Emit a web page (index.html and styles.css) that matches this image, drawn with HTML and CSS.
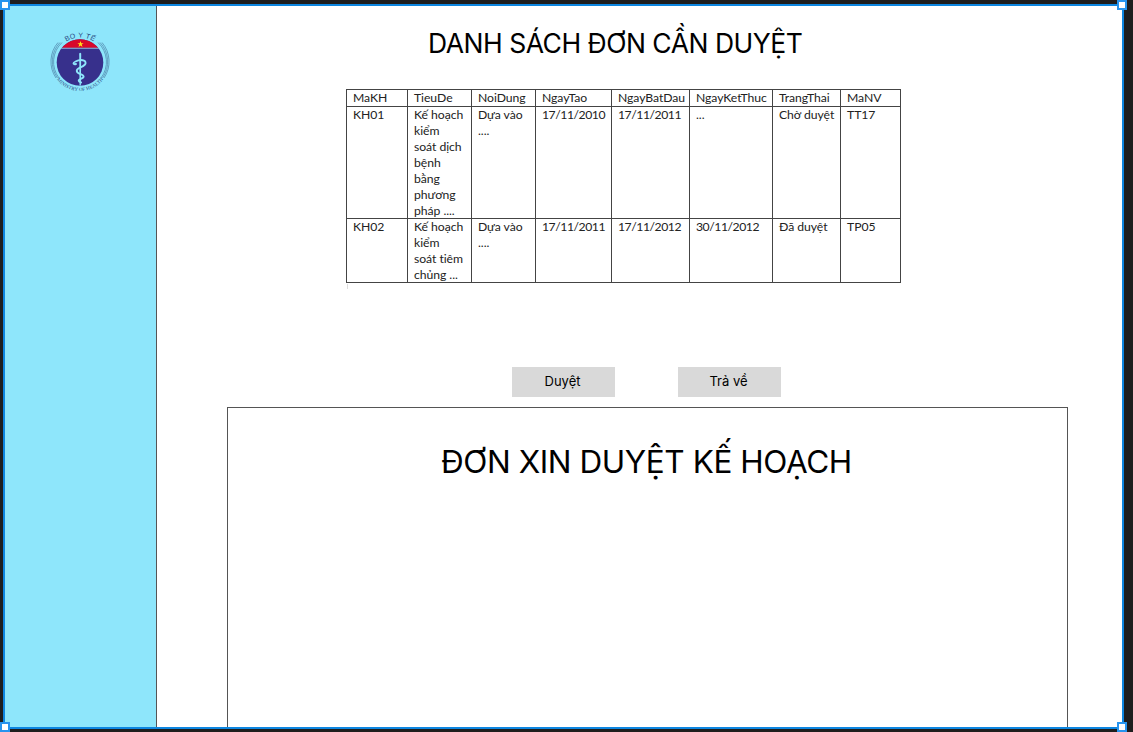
FILE: index.html
```html
<!DOCTYPE html>
<html lang="vi">
<head>
<meta charset="utf-8">
<title>Danh sách đơn cần duyệt</title>
<link rel="stylesheet" href="styles.css">
</head>
<body>
<div class="frame">
  <aside class="sidebar">
    <svg class="logo" viewBox="0 0 80 80" width="80" height="80">
      <defs>
        <path id="arc-top" d="M20 25.500A25 25 0 0 1 60 25.500"/>
        <path id="arc-bottom" d="M12 47A28.800 28.800 0 0 0 68 47"/>
        <clipPath id="disc"><circle cx="40" cy="40.500" r="23.300"/></clipPath>
      </defs>
      <g class="rings">
        <path d="M22 20.500A26.500 26.500 0 0 0 19 56M20 20.500A28 28 0 0 0 17.500 56M18 20.500A29.300 29.300 0 0 0 16 56"/>
        <path d="M58 20.500A26.500 26.500 0 0 1 61 56M60 20.500A28 28 0 0 1 62.500 56M62 20.500A29.300 29.300 0 0 1 64 56"/>
      </g>
      <g clip-path="url(#disc)">
        <rect class="disc-blue" x="16" y="16" width="48" height="49"/>
        <rect class="disc-red" x="16" y="16" width="48" height="9.800"/>
        <rect class="disc-line" x="16" y="25.800" width="48" height=".8"/>
      </g>
      <path class="star" d="M40.500 19l.8 2.200h2.300l-1.900 1.400.8 2.300-2-1.400-2 1.400.8-2.300-1.900-1.400h2.300z"/>
      <path class="staff" d="M39.200 31.500q1-1.500 2 0l-.3 32h-1.400z"/>
      <path class="snake" d="M36 42c-3 .8-3.500-1.200-.5-2.500 3-1.600 6.500-2 9-.7 3.200 3-1.300 5.400-4 6.500-5 2-4.800 4.800-.5 6.500 4.500 1.700 4.800 3.500.8 5-3 1.100-2.800 2.600.3 3.600"/>
      <text class="logo-top"><textPath href="#arc-top" startOffset="50%" textLength="29">BO Y TẾ</textPath></text>
      <text class="logo-bottom"><textPath href="#arc-bottom" startOffset="50%" textLength="54">MINISTRY OF HEALTH</textPath></text>
    </svg>
  </aside>
  <main class="content">
    <h1 class="title">DANH SÁCH ĐƠN CẦN DUYỆT</h1>
    <table class="plans">
      <colgroup><col class="w61"><col class="w64"><col class="w64"><col class="w76"><col class="w78"><col class="w83"><col class="w68"><col class="w60"></colgroup>
      <tr class="head"><th>MaKH</th><th>TieuDe</th><th>NoiDung</th><th>NgayTao</th><th>NgayBatDau</th><th>NgayKetThuc</th><th>TrangThai</th><th>MaNV</th></tr>
      <tr class="tall"><td>KH01</td><td><div class="lines">Kế hoạch<br>kiểm<br>soát dịch<br>bệnh<br>bằng<br>phương<br>pháp ....</div></td><td>Dựa vào<br>....</td><td class="date">17/11/2010</td><td class="date">17/11/2011</td><td>...</td><td>Chờ duyệt</td><td>TT17</td></tr>
      <tr class="short"><td>KH02</td><td><div class="lines">Kế hoạch<br>kiểm<br>soát tiêm<br>chủng ...</div></td><td>Dựa vào<br>....</td><td class="date">17/11/2011</td><td class="date">17/11/2012</td><td class="date">30/11/2012</td><td>Đã duyệt</td><td>TP05</td></tr>
    </table>
    <span class="mark"></span>
    <div class="actions"><button class="btn">Duyệt</button><button class="btn">Trả về</button></div>
    <section class="form"><h2 class="form-title">ĐƠN XIN DUYỆT KẾ HOẠCH</h2></section>
  </main>
  <i class="handle tl"></i><i class="handle tr"></i><i class="handle bl"></i><i class="handle br"></i>
</div>
</body>
</html>
```
FILE: styles.css
```css
* { box-sizing: border-box; }
body { margin: 0; padding: 4px 9px 3px 3px; width: 1133px; height: 732px; overflow: hidden; background: #1e1e1e; font-family: Inter, sans-serif; color: #000; }
.frame { position: relative; display: flex; width: 1121px; height: 725px; border: 2px solid #0d86e0; background: #fff; }
.sidebar { flex: none; width: 152px; padding: 16px 0 0 35px; background: #8ee6fb; border-right: 1px solid #555; }
.logo { display: block; }
.rings { fill: none; stroke: #4d83a8; stroke-width: .7; }
.disc-blue { fill: #37308c; }
.disc-red { fill: #d8082b; }
.disc-line { fill: #a8d8ee; }
.star { fill: #ffe21a; }
.staff { fill: #8ee6fb; }
.snake { fill: none; stroke: #8ee6fb; stroke-width: 1.900; stroke-linecap: round; }
.logo-top, .logo-bottom { fill: #28477f; text-anchor: middle; font-family: "Liberation Sans", sans-serif; }
.logo-top { font-size: 7px; }
.logo-bottom { font-size: 5px; font-family: "Liberation Serif", serif; }
.content { flex: 1; display: flex; flex-direction: column; align-items: flex-start; min-width: 0; }
.title { margin: 21px 0 0 271px; height: 32px; line-height: 32px; font-size: 26.500px; font-weight: 400; letter-spacing: -.49px; white-space: nowrap; }
.plans { margin: 30px 0 0 189px; width: 555px; table-layout: fixed; border-collapse: collapse; font: 12.200px/16px Lato, "Noto Sans", sans-serif; font-variant-ligatures: none; letter-spacing: -.05px; color: #222; }
.plans th, .plans td { padding: 0 0 0 6px; border: 1px solid #444; text-align: left; vertical-align: top; font-weight: 400; white-space: nowrap; }
.head { height: 17px; }
.tall { height: 112px; }
.short { height: 64px; }
.lines { margin-bottom: -2px; }
.plans .date { letter-spacing: -.45px; }
.w60 { width: 60px; } .w61 { width: 61px; } .w64 { width: 64px; } .w68 { width: 68px; } .w76 { width: 76px; } .w78 { width: 78px; } .w83 { width: 83px; }
.mark { width: 1px; height: 5px; margin: 1px 0 0 190px; background: #ddd; }
.actions { display: flex; gap: 63px; margin: 78px 0 0 355px; }
.btn { width: 103px; height: 30px; padding: 0 2px 2px 0; border: 0; background: #d9d9d9; color: #000; font: 13px/28px Inter, sans-serif; }
.form { flex: 1; margin: 10px 0 0 70px; width: 841px; border: 1px solid #555; border-bottom: 0; }
.form-title { margin: 34px 0 0 213px; line-height: 40px; font-size: 31.500px; font-weight: 400; letter-spacing: -.42px; white-space: nowrap; }
.handle { position: absolute; width: 10px; height: 10px; border: 2px solid #2794ee; background: #fff; }
.tl { left: -5px; top: -6px; }
.tr { right: -5px; top: -6px; }
.bl { left: -5px; bottom: -5px; }
.br { right: -5px; bottom: -5px; }
```
